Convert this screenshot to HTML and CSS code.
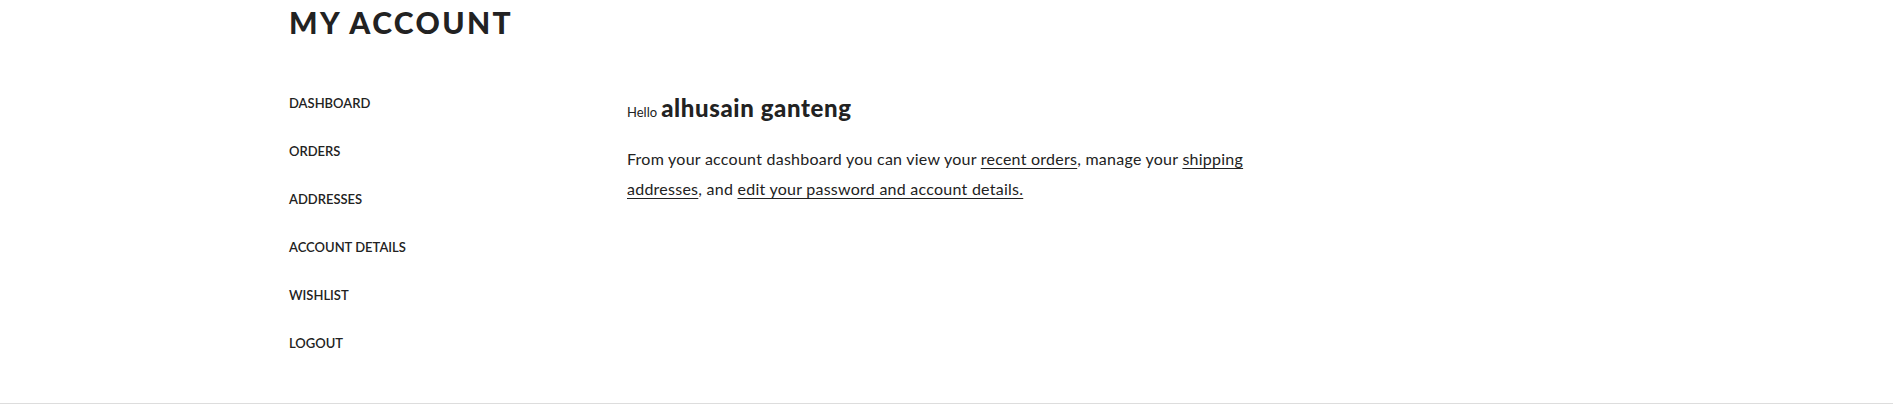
FILE: index.html
```html
<!DOCTYPE html>
<html lang="en">
<head>
<meta charset="utf-8">
<title>My Account</title>
<link rel="stylesheet" href="styles.css">
</head>
<body>
<main class="container">
  <h1 class="page-title">MY ACCOUNT</h1>
  <div class="account">
    <nav class="account-nav">
      <a href="#" class="nav-link">Dashboard</a>
      <a href="#" class="nav-link">Orders</a>
      <a href="#" class="nav-link">Addresses</a>
      <a href="#" class="nav-link">Account details</a>
      <a href="#" class="nav-link">Wishlist</a>
      <a href="#" class="nav-link">Logout</a>
    </nav>
    <section class="account-content">
      <p class="hello"><span class="hello-small">Hello</span> <strong class="hello-name">alhusain ganteng</strong></p>
      <p class="intro">From your account dashboard you can view your <a href="#">recent orders</a>, manage your <a href="#">shipping addresses</a>, and <a href="#">edit your password and account details.</a></p>
    </section>
  </div>
</main>
<footer class="footer"></footer>
</body>
</html>
```
FILE: styles.css
```css
* { box-sizing: border-box; }
html, body { margin: 0; padding: 0; background: #fff; }
body {
  font-family: "Lato", "Open Sans", sans-serif;
  color: #222;
}
.container {
  width: 1315px;
  margin: 0 auto;
  height: 403px;
}
.page-title {
  margin: 0;
  padding-top: 4px;
  font-size: 30px;
  line-height: 36px;
  font-weight: 900;
  letter-spacing: 2.4px;
}
.account {
  display: flex;
  margin-top: 55px;
}
.account-nav {
  width: 338px;
  display: flex;
  flex-direction: column;
  gap: 32px;
}
.nav-link {
  font-size: 13px;
  line-height: 16px;
  text-transform: uppercase;
  color: #222;
  text-decoration: none;
  font-weight: 600;
}
.account-content {
  width: 650px;
}
.hello {
  margin: 0;
  line-height: 26px;
}
.hello-small { font-size: 13px; }
.hello-name { font-size: 24px; font-weight: 900; letter-spacing: 0.6px; }
.intro {
  margin: 19px 0 0;
  font-size: 16px;
  line-height: 30px;
  letter-spacing: 0.25px;
}
.intro a { color: #222; text-decoration: underline; text-underline-offset: 3px; }
.footer {
  border-top: 1px solid #ddd;
  height: 3px;
}
```
